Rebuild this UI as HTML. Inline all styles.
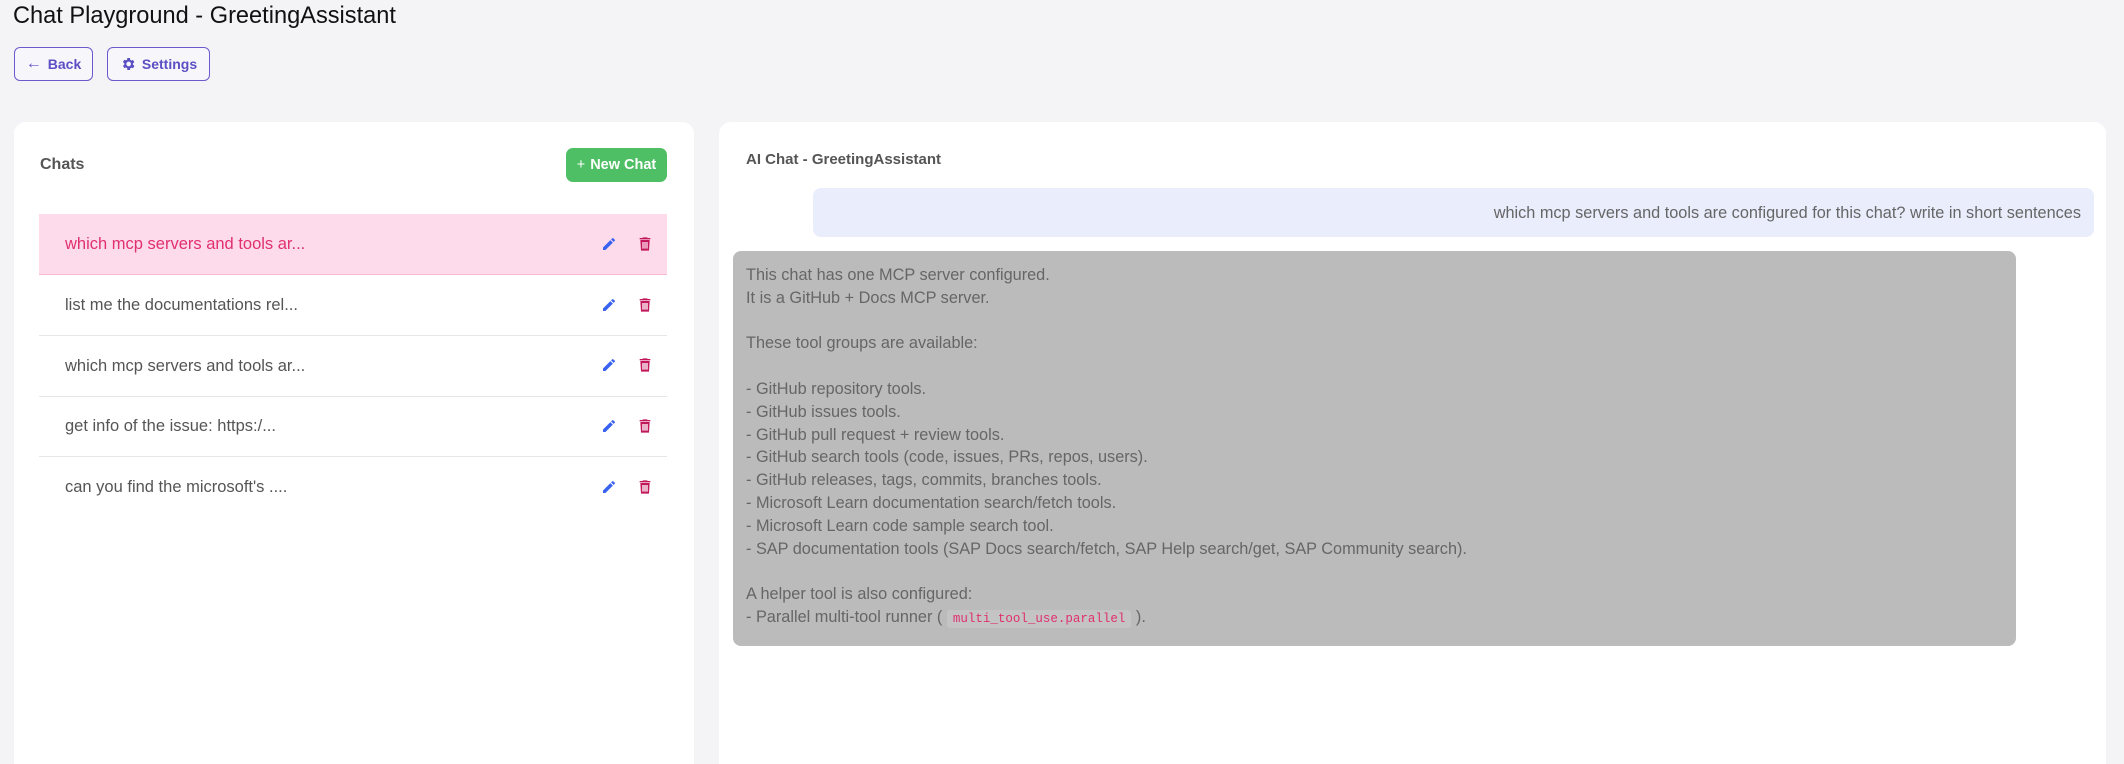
<!DOCTYPE html>
<html style="overflow:hidden;height:764px"><head><meta charset="utf-8"><style>
*{box-sizing:border-box;margin:0;padding:0}
body{width:2124px;height:764px;background:#f4f4f6;font-family:"Liberation Sans",sans-serif;overflow:hidden;position:relative}
.abs{position:absolute}
h1{position:absolute;left:13px;top:3px;font-size:23.6px;font-weight:400;color:#111}
.btn{position:absolute;top:47px;height:34px;border:1.5px solid #6a5acd;border-radius:6px;color:#5b4fc4;font-size:14px;font-weight:700;display:flex;align-items:center;justify-content:center;gap:6px;background:#f7f7fb}
.panel{position:absolute;background:#fff;border-radius:12px 12px 0 0}
.row{position:absolute;left:39px;width:628px;height:61px;border-bottom:1px solid #e6e6e6;font-size:16.5px;color:#555;display:flex;align-items:center;padding-left:26px}
.row.sel{background:#fddbea;color:#e0306e;border-bottom:1.5px solid #f7b9d3}
.ic{position:absolute}
.msg{font-size:16.3px;color:#666;line-height:22.8px}
code{font-family:"Liberation Mono",monospace;font-size:12.5px;color:#e0306e;background:#c4c4c4;padding:2px 6px;border-radius:3px}
</style></head><body>
<h1>Chat Playground - GreetingAssistant</h1>
<div class="btn" style="left:14px;width:79px"><span style="font-size:16px">←</span>Back</div>
<div class="btn" style="left:107px;width:103px"><svg width="16" height="16" viewBox="0 0 24 24"><path fill="#5b4fc4" d="M19.4 13a7.5 7.5 0 0 0 0-2l2.1-1.6-2-3.5-2.5 1a7 7 0 0 0-1.7-1L15 3h-4l-.4 2.6a7 7 0 0 0-1.7 1l-2.5-1-2 3.5L6.6 11a7.5 7.5 0 0 0 0 2l-2.1 1.6 2 3.5 2.5-1a7 7 0 0 0 1.7 1L11 21h4l.4-2.6a7 7 0 0 0 1.7-1l2.5 1 2-3.5zM13 15.5a3.5 3.5 0 1 1 0-7 3.5 3.5 0 0 1 0 7z"/></svg>Settings</div>

<div class="panel" style="left:14px;top:122px;width:680px;height:642px"></div>
<div class="abs" style="left:40px;top:156px;font-size:16px;font-weight:700;color:#555">Chats</div>
<div class="abs" style="left:566px;top:148px;width:101px;height:34px;background:#4fbf65;border-radius:7px;color:#fff;font-weight:700;font-size:14.5px;display:flex;align-items:center;justify-content:center;gap:5px"><span style="font-weight:400">+</span>New Chat</div>

<div class="row sel" style="top:214px">which mcp servers and tools ar...</div>
<div class="row" style="top:275px">list me the documentations rel...</div>
<div class="row" style="top:336px">which mcp servers and tools ar...</div>
<div class="row" style="top:396px">get info of the issue: https:/...</div>
<div class="row" style="top:457px;border-bottom:none">can you find the microsoft's ....</div>

<svg width="0" height="0" style="position:absolute"><defs>
<symbol id="pen" viewBox="0 0 24 24"><path fill="#3a62f0" d="M3 17.25V21h3.75L17.8 9.94l-3.75-3.75zM20.7 7.04a1 1 0 0 0 0-1.41l-2.34-2.34a1 1 0 0 0-1.41 0l-1.83 1.83 3.75 3.75z"/></symbol>
<symbol id="bin" viewBox="0 0 24 24"><path fill="#c2185b" d="M9 2h6l1 1h4v2H4V3h4zM5 6h14l-1 16H6zm3 3v10h2V9zm3 0v10h2V9zm3 0v10h2V9z"/></symbol></defs></svg>
<svg class="ic" style="left:601px;top:236px" width="16" height="16"><use href="#pen"/></svg>
<svg class="ic" style="left:637px;top:236px" width="16" height="16"><use href="#bin"/></svg>
<svg class="ic" style="left:601px;top:297px" width="16" height="16"><use href="#pen"/></svg>
<svg class="ic" style="left:637px;top:297px" width="16" height="16"><use href="#bin"/></svg>
<svg class="ic" style="left:601px;top:357px" width="16" height="16"><use href="#pen"/></svg>
<svg class="ic" style="left:637px;top:357px" width="16" height="16"><use href="#bin"/></svg>
<svg class="ic" style="left:601px;top:418px" width="16" height="16"><use href="#pen"/></svg>
<svg class="ic" style="left:637px;top:418px" width="16" height="16"><use href="#bin"/></svg>
<svg class="ic" style="left:601px;top:479px" width="16" height="16"><use href="#pen"/></svg>
<svg class="ic" style="left:637px;top:479px" width="16" height="16"><use href="#bin"/></svg>

<div class="panel" style="left:719px;top:122px;width:1387px;height:642px"></div>
<div class="abs" style="left:746px;top:151px;font-size:15px;font-weight:700;color:#555">AI Chat - GreetingAssistant</div>
<div class="abs msg" style="left:813px;top:188px;width:1281px;height:49px;background:#e9edfc;border-radius:8px;text-align:right;padding:12px 13px 0 0;line-height:26px">which mcp servers and tools are configured for this chat? write in short sentences</div>
<div class="abs msg" style="left:733px;top:251px;width:1283px;height:395px;background:#bbbbbb;border-radius:8px;padding:13px 13px 0 13px;white-space:pre">This chat has one MCP server configured.
It is a GitHub + Docs MCP server.

These tool groups are available:

- GitHub repository tools.
- GitHub issues tools.
- GitHub pull request + review tools.
- GitHub search tools (code, issues, PRs, repos, users).
- GitHub releases, tags, commits, branches tools.
- Microsoft Learn documentation search/fetch tools.
- Microsoft Learn code sample search tool.
- SAP documentation tools (SAP Docs search/fetch, SAP Help search/get, SAP Community search).

A helper tool is also configured:
- Parallel multi-tool runner ( <code>multi_tool_use.parallel</code> ).</div>
</body></html>
